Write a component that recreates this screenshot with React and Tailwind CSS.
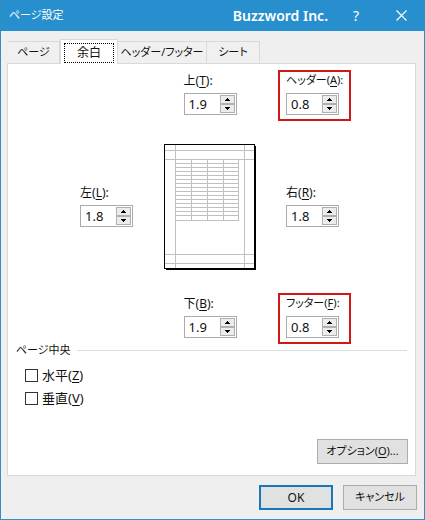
import { useState } from "react";

const TABS = [
  { name: "ページ", width: "w-[52px]" },
  { name: "余白", width: "w-[58px]" },
  { name: "ヘッダー/フッター", width: "w-[89px]" },
  { name: "シート", width: "w-[53px]" },
];

const TABLE_ROWS = [15, 19, 23, 27, 31, 35, 39, 43, 47, 51, 55, 59, 63, 67, 71, 76];
const TABLE_COLS = [27, 43, 59, 74];

const AccessKey = ({ text, letter, suffix = "" }) => (
  <>
    {text}(<span className="underline underline-offset-2">{letter}</span>){suffix}
  </>
);

const SpinButton = ({ label, path, onClick }) => (
  <button
    type="button"
    aria-label={label}
    onClick={onClick}
    className="flex flex-1 items-center justify-center border border-[#b0b0b0] bg-[#ececec]"
  >
    <svg viewBox="0 0 5 3" className="h-[3px] w-[5px]" shapeRendering="crispEdges">
      <path d={path} fill="#000" />
    </svg>
  </button>
);

const MarginField = ({ id, text, letter, initial, labelSize = "text-xs" }) => {
  const [value, setValue] = useState(initial);

  const step = (delta) => {
    const next = Math.max(0, (parseFloat(value) || 0) + delta);
    setValue(next.toFixed(1));
  };

  return (
    <div className="flex flex-col items-start pb-[3px]">
      <label htmlFor={id} className={`h-5 whitespace-nowrap ${labelSize}`}>
        <AccessKey text={text} letter={letter} suffix=":" />
      </label>
      <div className="flex h-[22px] w-[53px] border border-[#ababab] bg-white p-px">
        <input
          id={id}
          type="text"
          value={value}
          onChange={(e) => setValue(e.target.value)}
          className="w-0 min-w-0 flex-1 pl-[3px] text-[13px] leading-4 outline-none"
        />
        <div className="flex w-[15px] flex-col">
          <SpinButton label="+" path="M2 0h1v1h1v1h1v1H0V2h1V1h1z" onClick={() => step(0.1)} />
          <SpinButton label="-" path="M0 0h5v1H4v1H3v1H2V2H1V1H0z" onClick={() => step(-0.1)} />
        </div>
      </div>
    </div>
  );
};

const Highlight = ({ children }) => (
  <div className="border-2 border-[#d01818] px-1.5 py-px">{children}</div>
);

const PagePreview = () => (
  <svg viewBox="0 0 92 126" className="h-[126px] w-[92px]" shapeRendering="crispEdges">
    <rect x="2" y="2" width="90" height="124" fill="#000" />
    <rect x="0" y="0" width="91" height="125" fill="#000" />
    <rect x="1" y="1" width="89" height="123" fill="#fff" />
    <g fill="#c0c0c0">
      {[6, 15, 110, 119].map((y) => (
        <rect key={y} x="1" y={y} width="89" height="1" />
      ))}
      {[11, 80].map((x) => (
        <rect key={x} x={x} y="1" width="1" height="123" />
      ))}
      {TABLE_ROWS.map((y) => (
        <rect key={y} x="11" y={y} width="64" height="1" />
      ))}
      {TABLE_COLS.map((x) => (
        <rect key={x} x={x} y="15" width="1" height="62" />
      ))}
    </g>
  </svg>
);

const CheckRow = ({ text, letter }) => (
  <label className="flex items-center gap-1">
    <input
      type="checkbox"
      className="size-[13px] appearance-none border border-[#333333] bg-white checked:bg-[#333333]"
    />
    <span className="text-[13px] leading-4">
      <AccessKey text={text} letter={letter} />
    </span>
  </label>
);

const TitleBar = () => (
  <header className="flex h-[31px] items-center bg-[#288fcf] pr-[17px] pl-2 text-white">
    <h1 className="flex-1 text-[11px]">ページ設定</h1>
    <span className="text-sm font-semibold">Buzzword Inc.</span>
    <button type="button" className="ml-6 w-2 text-sm">
      ?
    </button>
    <button type="button" aria-label="閉じる" className="ml-9">
      <svg viewBox="0 0 11 11" className="size-[11px]">
        <path d="M.5.5l10 10M10.5.5l-10 10" stroke="#fff" strokeWidth="1.1" fill="none" />
      </svg>
    </button>
  </header>
);

const Tab = ({ name, width, active, onClick }) => (
  <button
    type="button"
    role="tab"
    aria-selected={active}
    onClick={onClick}
    className={`${width} whitespace-nowrap ${
      active
        ? "z-10 -mb-px h-[25px] border border-b-0 border-[#d9d9d9] bg-white p-[3px] text-xs"
        : "h-[22px] border-t border-r border-[#d9d9d9] bg-[#f0f0f0] text-[11px]"
    }`}
  >
    {active ? (
      <span className="flex h-5 items-center justify-center border border-dotted border-black">
        {name}
      </span>
    ) : (
      name
    )}
  </button>
);

const App = () => {
  const [activeTab, setActiveTab] = useState("余白");

  return (
    <div className="flex min-h-screen flex-col border border-t-0 border-[#3191b8] bg-[#efefef] font-['Noto_Sans','Noto_Sans_CJK_JP',sans-serif] text-xs text-[#111111] [font-feature-settings:'palt']">
      <TitleBar />

      {/* Tabs */}
      <div role="tablist" className="flex h-8 items-end pl-[7px]">
        {TABS.map((tab) => (
          <Tab
            key={tab.name}
            name={tab.name}
            width={tab.width}
            active={tab.name === activeTab}
            onClick={() => setActiveTab(tab.name)}
          />
        ))}
      </div>

      {/* Margins */}
      <main className="mr-2 ml-1.5 flex flex-1 flex-col border border-[#d9d9d9] bg-white pt-1.5">
        <div className="grid grid-cols-[62px_92px_73px] items-center justify-center gap-x-[22px] gap-y-[23px] pl-2">
          <div className="col-start-2 justify-self-center">
            <MarginField id="top" text="上" letter="T" initial="1.9" />
          </div>
          <Highlight>
            <MarginField
              id="header"
              text="ヘッダー"
              letter="A"
              initial="0.8"
              labelSize="text-[11px]"
            />
          </Highlight>
          <MarginField id="left" text="左" letter="L" initial="1.8" />
          <PagePreview />
          <div className="pl-2">
            <MarginField id="right" text="右" letter="R" initial="1.8" />
          </div>
          <div className="col-start-2 justify-self-center">
            <MarginField id="bottom" text="下" letter="B" initial="1.9" />
          </div>
          <Highlight>
            <MarginField
              id="footer"
              text="フッター"
              letter="F"
              initial="0.8"
              labelSize="text-[11px]"
            />
          </Highlight>
        </div>

        {/* Center on page */}
        <fieldset className="px-2">
          <legend className="flex w-full items-center gap-1.5 text-[11px] leading-3">
            ページ中央
            <span className="h-px flex-1 bg-[#dcdcdc]" />
          </legend>
          <div className="flex flex-col items-start gap-[7px] pt-[11px] pl-[9px]">
            <CheckRow text="水平" letter="Z" />
            <CheckRow text="垂直" letter="V" />
          </div>
        </fieldset>

        <button
          type="button"
          className="mt-auto mr-[7px] mb-[11px] h-[25px] w-[91px] self-end border border-[#adadad] bg-[#e1e1e1] text-[11px]"
        >
          <AccessKey text="オプション" letter="O" suffix="..." />
        </button>
      </main>

      <footer className="flex justify-end gap-2.5 pt-[9px] pr-[7px] pb-[9px]">
        <button type="button" className="h-[25px] w-[74px] border-2 border-[#1878b8] bg-[#e1e1e1]">
          OK
        </button>
        <button
          type="button"
          className="h-[25px] w-[74px] border border-[#adadad] bg-[#e1e1e1] text-[11px]"
        >
          キャンセル
        </button>
      </footer>
    </div>
  );
};

export default App;
